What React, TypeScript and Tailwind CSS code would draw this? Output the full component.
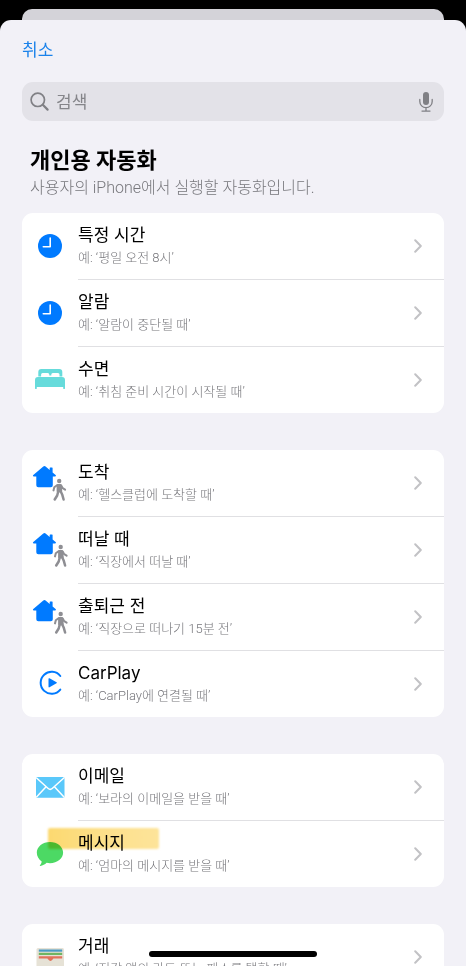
import type { ReactNode } from "react";

type Trigger = {
  id: string;
  title: string;
  example: string;
  icon: ReactNode;
  marked?: boolean;
};

function IconBox({ children }: { children: ReactNode }) {
  return (
    <svg viewBox="0 0 40 40" className="h-10 w-10 shrink-0" fill="none" aria-hidden="true">
      {children}
    </svg>
  );
}

function ClockIcon() {
  return (
    <IconBox>
      <circle cx="20" cy="20" r="12" fill="#007aff" />
      <path d="M20.2 12v8.8h-6.9" stroke="#fff" strokeWidth="1.6" strokeLinejoin="round" strokeLinecap="round" />
    </IconBox>
  );
}

function BedIcon() {
  return (
    <IconBox>
      <path
        d="M8.3 16.500V12a3 3 0 0 1 3-3h18a3 3 0 0 1 3 3v4.500h-2.800v-1.900a1.500 1.500 0 0 0-1.500-1.500h-5.200a1.500 1.500 0 0 0-1.500 1.500v1h-2v-1a1.500 1.500 0 0 0-1.500-1.500h-5.200a1.500 1.500 0 0 0-1.500 1.500v1.900z"
        fill="#66dbdb"
      />
      <path
        d="M5 28.200V20a3 3 0 0 1 3-3h24a3 3 0 0 1 3 3v8.200a.9.9 0 0 1-1.800 0v-1.200H6.800v1.200a.9.9 0 0 1-1.800 0z"
        fill="#66dbdb"
      />
    </IconBox>
  );
}

function HomeWalkIcon({ far = false }: { far?: boolean }) {
  return (
    <IconBox>
      <path
        d="M13.300 3.500a1.800 1.800 0 0 1 2.300 0l4.100 3.600V5.100c0-.3.200-.5.500-.5h1.900c.3 0 .5.200.5.500v4.500l3 2.500c.7.600.3 1.400-.5 1.400h-2.300v8.700a2 2 0 0 1-2 2H8.300a2 2 0 0 1-2-2v-8.700H3.800c-.8 0-1.200-.8-.5-1.400z"
        fill="#007aff"
      />
      <g transform={far ? "translate(1.500 -1)" : undefined} stroke="#8e8e93" strokeLinecap="round" strokeLinejoin="round">
        <circle cx="29.200" cy="18" r="2.200" fill="#8e8e93" stroke="none" />
        <path d="M27.800 22.300l2.700-.1.500 5.800-3.200.2z" fill="#8e8e93" strokeWidth="2.400" />
        <path d="M27 22.200l-2.700 2-.8 3.200M31.200 22.600l1.500 2.600 2.400 1.500" strokeWidth="2" />
        <path d="M28.300 28.200l-1.100 4.300-2.500 4M30.500 28l1.800 3.800 1.300 4.700" strokeWidth="2.500" />
      </g>
    </IconBox>
  );
}

function CarPlayIcon() {
  return (
    <IconBox>
      <path d="M30.300 12a11 11 0 1 0 0 13.600" stroke="#007aff" strokeWidth="2" strokeLinecap="round" />
      <path d="M18.500 14.800v8c0 .6.500.8 1 .5l7-4c.5-.3.500-.8 0-1.100l-7-3.900c-.5-.3-1-.1-1 .5z" fill="#007aff" />
    </IconBox>
  );
}

function MailIcon() {
  return (
    <IconBox>
      <rect x="6" y="10" width="28.500" height="20.800" rx="1.500" fill="#5ac8fa" />
      <path
        d="M6.300 10.800l11.900 10.700a3 3 0 0 0 4 0l11.900-10.700M6.300 30.200l10-10.600M34.200 30.200l-10-10.600"
        stroke="#fff"
        strokeWidth="1.500"
      />
    </IconBox>
  );
}

function MessageIcon() {
  return (
    <IconBox>
      <path
        d="M20 8c7.300 0 13.100 4.700 13.100 10.600S27.300 29.200 20 29.200c-1.200 0-2.300-.1-3.400-.4-1.600 1.700-4 2.900-6.300 3.100-.5 0-.6-.4-.3-.8.9-1 1.600-2.400 1.700-3.700-3-1.900-4.900-5.200-4.900-8.800C6.800 12.700 12.700 8 20 8z"
        fill="#4cd964"
      />
    </IconBox>
  );
}

function WalletIcon() {
  return (
    <IconBox>
      <rect x="6.500" y="11" width="27.500" height="22" rx="1.500" fill="#e6e2d6" />
      <path d="M8.800 12.500h23.400v2.200H8.800z" fill="#4a9bc4" />
      <path d="M8.800 15.800h23.400v2.200H8.800z" fill="#6fb562" />
      <path
        d="M8.800 19.200h23.400v2.200h-8.200c-.8 0-1 .5-1.400 1.200-1.100 1.700-3.200 1.700-4.300 0-.4-.7-.7-1.200-1.500-1.200h-8z"
        fill="#e2735c"
      />
    </IconBox>
  );
}

const groups: Trigger[][] = [
  [
    { id: "time", title: "특정 시간", example: "예: ‘평일 오전 8시’", icon: <ClockIcon /> },
    { id: "alarm", title: "알람", example: "예: ‘알람이 중단될 때’", icon: <ClockIcon /> },
    { id: "sleep", title: "수면", example: "예: ‘취침 준비 시간이 시작될 때’", icon: <BedIcon /> },
  ],
  [
    { id: "arrive", title: "도착", example: "예: ‘헬스클럽에 도착할 때’", icon: <HomeWalkIcon /> },
    { id: "leave", title: "떠날 때", example: "예: ‘직장에서 떠날 때’", icon: <HomeWalkIcon far /> },
    { id: "commute", title: "출퇴근 전", example: "예: ‘직장으로 떠나기 15분 전’", icon: <HomeWalkIcon far /> },
    { id: "carplay", title: "CarPlay", example: "예: ‘CarPlay에 연결될 때’", icon: <CarPlayIcon /> },
  ],
  [
    { id: "email", title: "이메일", example: "예: ‘보라의 이메일을 받을 때’", icon: <MailIcon /> },
    { id: "message", title: "메시지", example: "예: ‘엄마의 메시지를 받을 때’", icon: <MessageIcon />, marked: true },
  ],
  [{ id: "wallet", title: "거래", example: "예: ‘지갑 앱의 카드 또는 패스를 탭할 때’", icon: <WalletIcon /> }],
];

function TriggerRow({ trigger }: { trigger: Trigger }) {
  return (
    <li className="group">
      <button type="button" className="relative flex h-[66px] w-full items-center pr-[22px] pl-2 text-left">
        {trigger.icon}
        {trigger.marked && (
          <span className="absolute top-[7px] left-[26px] h-[21px] w-[111px] rounded-xs bg-linear-to-r from-[#fcd970] via-[#fde08a] to-[#fde49a] mix-blend-multiply blur-[1px]" />
        )}
        <span className="relative ml-2 flex grow flex-col">
          <span className="text-[17px] leading-6 text-black">{trigger.title}</span>
          <span className="font-['Roboto','Noto_Sans_CJK_KR',sans-serif] text-[13px] leading-[22px] font-light text-[#77777c]">
            {trigger.example}
          </span>
        </span>
        <svg viewBox="0 0 8 14" className="h-3.5 w-2 shrink-0" fill="none" aria-hidden="true">
          <path d="M1.200 1.200L6.800 7l-5.600 5.800" stroke="#c2c2c5" strokeWidth="2" strokeLinecap="round" strokeLinejoin="round" />
        </svg>
      </button>
      <div className="ml-14 h-px bg-[#e0e0e3] group-last:hidden" />
    </li>
  );
}

function SearchBar() {
  return (
    <div className="mx-[22px] mt-5 flex h-[39px] shrink-0 items-center rounded-[11px] bg-[#e3e2e8] pr-[11px] pl-2">
      <svg viewBox="0 0 20 20" className="h-5 w-5 shrink-0" fill="none" aria-hidden="true">
        <circle cx="7.800" cy="7.800" r="6.700" stroke="#808085" strokeWidth="1.700" />
        <path d="M12.800 12.800l4.800 4.800" stroke="#808085" strokeWidth="2.200" strokeLinecap="round" />
      </svg>
      <input
        type="search"
        aria-label="검색"
        placeholder="검색"
        className="ml-1.5 min-w-0 grow bg-transparent text-[17px] leading-6 outline-none placeholder:text-[#85858a]"
      />
      <button type="button" aria-label="음성 입력">
        <svg viewBox="0 0 14 20" className="h-5 w-3.5" fill="none" aria-hidden="true">
          <rect x="4" y="0" width="6" height="13" rx="3" fill="#808085" />
          <path d="M.8 7.500v2a6.200 6.200 0 0 0 12.400 0v-2M7 15.700V19M3 19.100h8" stroke="#808085" strokeWidth="1.300" strokeLinecap="round" />
        </svg>
      </button>
    </div>
  );
}

export default function App() {
  return (
    <div className="relative flex h-screen flex-col overflow-hidden bg-black pt-[9px] font-['Inter','Noto_Sans_CJK_KR',sans-serif]">
      <div className="mx-[22px] h-[11px] shrink-0 rounded-t-[10px] bg-[#d4d3d9]" />
      <main className="flex min-h-0 grow flex-col rounded-t-[11px] bg-[#f2f1f7]">
        <header className="px-[22px] pt-[18px]">
          <button type="button" className="block text-[17px] leading-6 text-[#1a82ea]">
            취소
          </button>
        </header>
        <SearchBar />
        <div className="min-h-0 grow overflow-y-auto px-[22px] pt-6 [scrollbar-width:none]">
          <h1 className="pl-2 text-[22px] leading-[30px] font-bold text-black">개인용 자동화</h1>
          <p className="pl-2 font-['Roboto','Noto_Sans_CJK_KR',sans-serif] text-[16px] leading-[26px] font-light text-[#77777c]">
            사용자의 iPhone에서 실행할 자동화입니다.
          </p>
          <div className="mt-3 flex flex-col gap-[37px]">
            {groups.map((group) => (
              <ul key={group[0].id} className="rounded-[11px] bg-white">
                {group.map((trigger) => (
                  <TriggerRow key={trigger.id} trigger={trigger} />
                ))}
              </ul>
            ))}
          </div>
        </div>
      </main>
      <div className="absolute inset-x-0 bottom-[9px] mx-auto h-1.5 w-[36%] rounded-full bg-black" />
    </div>
  );
}
